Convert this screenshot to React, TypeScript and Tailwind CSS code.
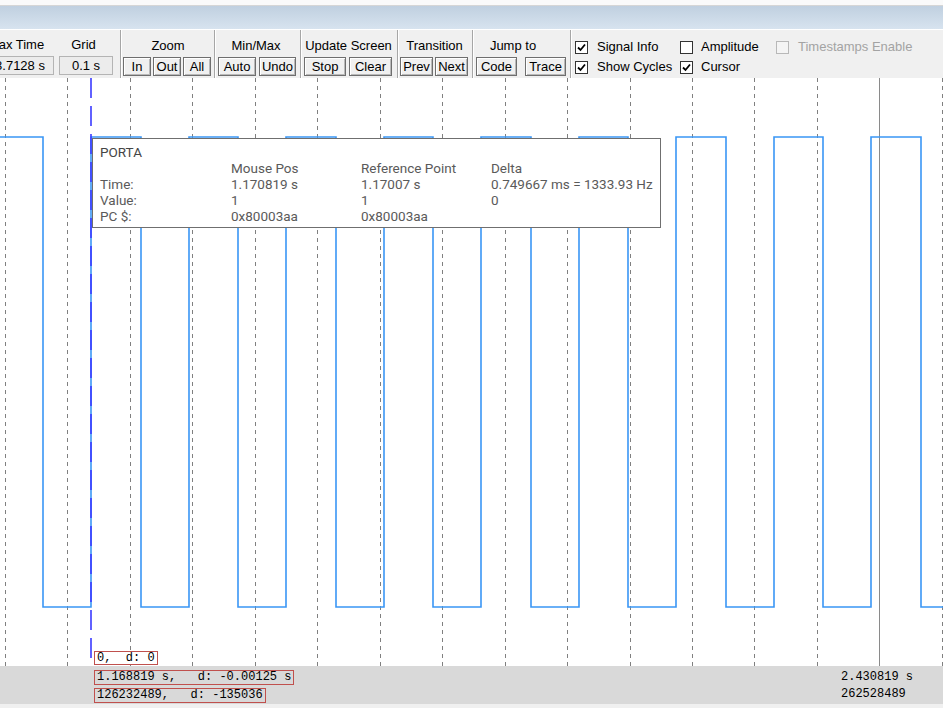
import React from "react";

const GRID_X = Array.from({ length: 16 }, (_, i) => Math.round(5 + i * 62.45));
const HIGH = 59;
const LOW = 529;

function wavePath() {
  let d = `M0 ${HIGH}`;
  for (let k = 0; k < 10; k++) {
    const fall = Math.round(43 + k * 97.5);
    const rise = Math.round(91 + k * 97.5);
    d += ` H${fall} V${LOW} H${rise} V${HIGH}`;
  }
  return d;
}

function Btn({ className, children }: { className: string; children: React.ReactNode }) {
  return (
    <div
      className={`h-[19px] flex items-center justify-center border border-[#6e6e6e] bg-[#f0f0f0] shadow-[inset_1px_1px_0_#ffffff,inset_-1px_-1px_0_#b9b9b9] ${className}`}
    >
      {children}
    </div>
  );
}

function Field({ className, children }: { className: string; children: React.ReactNode }) {
  return (
    <div
      className={`h-[19px] flex items-center justify-center border border-[#b4b4b4] bg-[#ececec] ${className}`}
    >
      {children}
    </div>
  );
}

function Sep() {
  return <div className="w-[2px] h-full border-l border-[#a6a6a6] border-r border-r-white" />;
}

function Check({ checked, disabled }: { checked?: boolean; disabled?: boolean }) {
  return (
    <div
      className={`w-[13px] h-[13px] flex items-center justify-center border ${
        disabled ? "border-[#b8b8b8] bg-[#f4f4f4]" : "border-[#333333] bg-white"
      }`}
    >
      {checked && (
        <svg width="9" height="9" viewBox="0 0 9 9">
          <path d="M1 4.5 L3.5 7 L8 1.5" fill="none" stroke="#000" strokeWidth="1.8" />
        </svg>
      )}
    </div>
  );
}

function Group({
  label,
  className,
  labelClass = "",
  children,
}: {
  label: string;
  className: string;
  labelClass?: string;
  children: React.ReactNode;
}) {
  return (
    <div className={`flex flex-col pt-[8px] ${className}`}>
      <div className={`h-[16px] leading-[16px] text-center ${labelClass}`}>{label}</div>
      <div className="mt-[3px] flex">{children}</div>
    </div>
  );
}

export default function App() {
  return (
    <div className="w-[943px] h-[708px] overflow-hidden bg-white font-['Liberation_Sans',Arial,sans-serif] text-[13px] text-black flex flex-col">
      <div className="h-[5px] bg-[#fafafa]" />
      <div className="h-[1px] bg-[#d6d6d6]" />
      <div className="h-[23px] bg-gradient-to-b from-[#c0d0e0] to-[#d7e3ef]" />

      {/* toolbar */}
      <div className="h-[49px] bg-[#f0f0f0] border-t border-white flex">
        <div className="w-[120px] flex">
          <div className="-ml-[14px] w-[68px] flex flex-col pt-[7px]">
            <div className="h-[16px] leading-[16px] text-center pr-[8px] whitespace-nowrap">Max Time</div>
            <Field className="mt-[3px] w-[68px]">3.7128 s</Field>
          </div>
          <div className="ml-[5px] w-[54px] flex flex-col pt-[7px]">
            <div className="h-[16px] leading-[16px] text-center -ml-[5px]">Grid</div>
            <Field className="mt-[3px] w-[54px]">0.1 s</Field>
          </div>
        </div>
        <Sep />
        <Group label="Zoom" className="w-[92px]">
          <div className="flex gap-[2px] pl-[1px]">
            <Btn className="w-[28px]">In</Btn>
            <Btn className="w-[28px]">Out</Btn>
            <Btn className="w-[28px]">All</Btn>
          </div>
        </Group>
        <Sep />
        <Group label="Min/Max" className="w-[84px]" labelClass="-ml-[4px]">
          <div className="flex gap-[3px] pl-[2px]">
            <Btn className="w-[38px]">Auto</Btn>
            <Btn className="w-[37px]">Undo</Btn>
          </div>
        </Group>
        <Sep />
        <Group label="Update Screen" className="w-[95px]" labelClass="-ml-[2px]">
          <div className="flex gap-[3px] pl-[2px]">
            <Btn className="w-[42px]">Stop</Btn>
            <Btn className="w-[43px]">Clear</Btn>
          </div>
        </Group>
        <Sep />
        <Group label="Transition" className="w-[73px]" labelClass="-ml-[2px]">
          <div className="flex gap-[2px] pl-[1px]">
            <Btn className="w-[33px]">Prev</Btn>
            <Btn className="w-[33px]">Next</Btn>
          </div>
        </Group>
        <Sep />
        <Group label="Jump to" className="w-[96px]" labelClass="pr-[18px]">
          <div className="flex gap-[8px] pl-[2px]">
            <Btn className="w-[41px]">Code</Btn>
            <Btn className="w-[41px]">Trace</Btn>
          </div>
        </Group>
        <Sep />
        <div className="pl-[3px] pt-[7px] grid grid-cols-[105px_96px_auto] grid-rows-[20px_20px]">
          <div className="flex items-center gap-[9px]">
            <Check checked />
            <span>Signal Info</span>
          </div>
          <div className="flex items-center gap-[8px]">
            <Check />
            <span>Amplitude</span>
          </div>
          <div className="flex items-center gap-[9px] text-[#a3a3a3]">
            <Check disabled />
            <span>Timestamps Enable</span>
          </div>
          <div className="flex items-center gap-[9px]">
            <Check checked />
            <span>Show Cycles</span>
          </div>
          <div className="flex items-center gap-[8px]">
            <Check checked />
            <span>Cursor</span>
          </div>
        </div>
      </div>

      {/* plot */}
      <div className="relative h-[588px] bg-white">
        <svg width="943" height="588" className="block">
          {GRID_X.map((x) => (
            <line
              key={x}
              x1={x + 0.5}
              x2={x + 0.5}
              y1={0}
              y2={588}
              stroke="#808080"
              strokeWidth="1"
              strokeDasharray="4 4"
            />
          ))}
          <line x1={879.5} x2={879.5} y1={0} y2={588} stroke="#8a8a8a" strokeWidth="1" />
          <path d={wavePath()} fill="none" stroke="#3a96f5" strokeWidth="1.6" />
          <line
            x1={91}
            x2={91}
            y1={0}
            y2={588}
            stroke="#3b3bff"
            strokeWidth="1.6"
            strokeDasharray="20 8"
          />
        </svg>

        {/* signal info tooltip */}
        <div className="absolute left-[92px] top-[60px] w-[569px] h-[90px] bg-white border border-[#6f6f6f] pl-[7px] pt-[5px] font-['Roboto',sans-serif] text-[13.5px] leading-[16px] text-[#5a5a5a]">
          <div className="text-[#454545]">PORTA</div>
          <div className="grid grid-cols-[131px_130px_130px_auto]">
            <div />
            <div>Mouse Pos</div>
            <div>Reference Point</div>
            <div>Delta</div>
            <div>Time:</div>
            <div>1.170819 s</div>
            <div>1.17007 s</div>
            <div>0.749667 ms = 1333.93 Hz</div>
            <div>Value:</div>
            <div>1</div>
            <div>1</div>
            <div>0</div>
            <div>PC $:</div>
            <div>0x80003aa</div>
            <div>0x80003aa</div>
            <div />
          </div>
        </div>

        <div className="absolute left-[94px] bottom-[1px] border border-[#c0504d] bg-white px-[2px] font-['Liberation_Mono',monospace] text-[12px] leading-[12px] whitespace-pre">
          {"0,  d: 0"}
        </div>
      </div>

      {/* status bar */}
      <div className="h-[38px] bg-[#d9d9d9] flex font-['Liberation_Mono',monospace] text-[12px] leading-[13px] whitespace-pre">
        <div className="pl-[94px] pt-[4px] flex flex-col gap-[3px] items-start">
          <div className="border border-[#c0504d] px-[2px]">{"1.168819 s,   d: -0.00125 s"}</div>
          <div className="border border-[#c0504d] px-[2px]">{"126232489,   d: -135036"}</div>
        </div>
        <div className="ml-auto mr-[28px] pt-[5px] flex flex-col gap-[4px] w-[74px]">
          <div>2.430819 s</div>
          <div>262528489</div>
        </div>
      </div>
      <div className="h-[4px] bg-[#f0f0f0]" />
    </div>
  );
}
